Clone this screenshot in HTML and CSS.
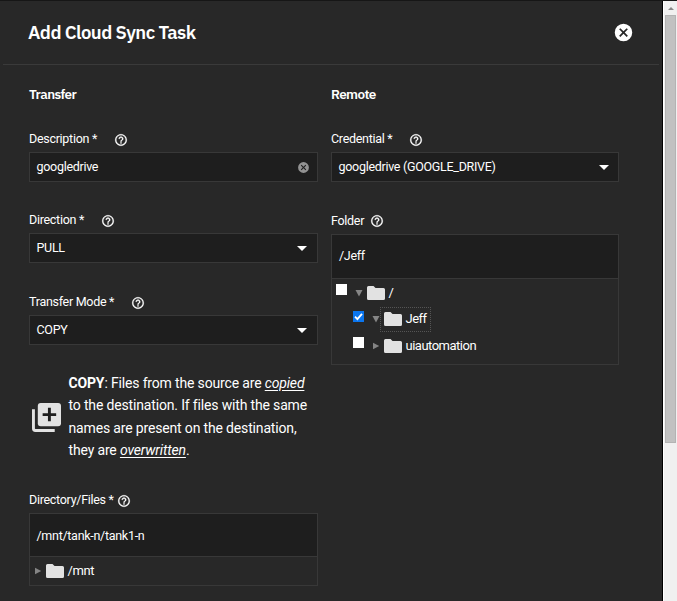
FILE: index.html
```
<!DOCTYPE html>
<html lang="en">
<head>
<meta charset="utf-8">
<title>Add Cloud Sync Task</title>
<link rel="stylesheet" href="styles.css">
</head>
<body>
<svg class="symbols" width="0" height="0">
  <symbol id="help" viewBox="0 0 24 24"><path d="M11 18h2v-2h-2v2zm1-16C6.48 2 2 6.48 2 12s4.48 10 10 10 10-4.48 10-10S17.52 2 12 2zm0 18c-4.410 0-8-3.590-8-8s3.590-8 8-8 8 3.590 8 8-3.590 8-8 8zm0-14c-2.210 0-4 1.790-4 4h2c0-1.100.9-2 2-2s2 .9 2 2c0 2-3 1.750-3 5h2c0-2.250 3-2.500 3-5 0-2.210-1.790-4-4-4z"/></symbol>
  <symbol id="cancel" viewBox="0 0 24 24"><path d="M12 2a10 10 0 1 0 0 20 10 10 0 0 0 0-20zm5 13.590L15.590 17 12 13.410 8.410 17 7 15.590 10.590 12 7 8.410 8.410 7 12 10.590 15.590 7 17 8.410 13.410 12z"/></symbol>
  <symbol id="folder" viewBox="0 0 18 14"><path d="M1.500 0H6.500L8.500 2H16.500Q18 2 18 3.500V12.500Q18 14 16.500 14H1.500Q0 14 0 12.500V1.500Q0 0 1.500 0z"/></symbol>
  <symbol id="down" viewBox="0 0 8 8"><path d="M.5 1h7L4 7.500z"/></symbol>
  <symbol id="right" viewBox="0 0 8 8"><path d="M1 .8v6.400L7.200 4z"/></symbol>
</svg>
<div class="window">
  <main class="panel">
    <header class="header">
      <h1 class="title">Add Cloud Sync Task</h1>
      <svg class="close"><use href="#cancel"/></svg>
    </header>
    <div class="columns">
      <section class="column">
        <h2 class="heading">Transfer</h2>
        <div class="field">
          <div class="label"><span>Description *</span><svg class="help wide"><use href="#help"/></svg></div>
          <div class="control"><span>googledrive</span><svg class="clear"><use href="#cancel"/></svg></div>
        </div>
        <div class="field">
          <div class="label"><span>Direction *</span><svg class="help wide"><use href="#help"/></svg></div>
          <div class="control"><span>PULL</span><i class="caret"></i></div>
        </div>
        <div class="field mode">
          <div class="label"><span>Transfer Mode *</span><svg class="help wide"><use href="#help"/></svg></div>
          <div class="control"><span>COPY</span><i class="caret"></i></div>
        </div>
        <div class="note">
          <svg class="copy" viewBox="0 0 30 30"><path d="M1.500 6.500V26.500Q1.500 28.500 3.500 28.500H23.500" fill="none" stroke="#e2e2e2" stroke-width="3"/><rect x="6" width="24" height="24" rx="3" fill="#e2e2e2"/><path d="M18 5v14M11 12h14" stroke="#1e1e1e" stroke-width="3"/></svg>
          <p><b>COPY</b>: Files from the source are <em>copied</em><br>to the destination. If files with the same<br>names are present on the destination,<br>they are <em>overwritten</em>.</p>
        </div>
        <div class="field directory">
          <div class="label"><span>Directory/Files *</span><svg class="help"><use href="#help"/></svg></div>
          <div class="explorer">
            <div class="path">/mnt/tank-n/tank1-n</div>
            <div class="node mnt"><svg class="arrow"><use href="#right"/></svg><span class="item"><svg class="folder"><use href="#folder"/></svg>/mnt</span></div>
          </div>
        </div>
      </section>
      <section class="column">
        <h2 class="heading">Remote</h2>
        <div class="field">
          <div class="label"><span>Credential *</span><svg class="help wide"><use href="#help"/></svg></div>
          <div class="control"><span>googledrive (GOOGLE_DRIVE)</span><i class="caret"></i></div>
        </div>
        <div class="field remote-folder">
          <div class="label"><span>Folder</span><svg class="help"><use href="#help"/></svg></div>
          <div class="explorer tall">
            <div class="path">/Jeff</div>
            <div class="node"><i class="check"></i><svg class="arrow"><use href="#down"/></svg><span class="item"><svg class="folder"><use href="#folder"/></svg>/</span></div>
            <div class="node child"><i class="check on"><svg viewBox="0 0 11 11"><path d="M2 5.700l2.400 2.500L9 2.800"/></svg></i><svg class="arrow"><use href="#down"/></svg><span class="item selected"><svg class="folder"><use href="#folder"/></svg>Jeff</span></div>
            <div class="node child"><i class="check"></i><svg class="arrow"><use href="#right"/></svg><span class="item"><svg class="folder"><use href="#folder"/></svg>uiautomation</span></div>
          </div>
        </div>
      </section>
    </div>
  </main>
  <aside class="scrollbar"><div class="scroll-up"><i></i></div><div class="thumb"></div></aside>
</div>
</body>
</html>
```
FILE: styles.css
```
* { box-sizing: border-box; }
body { margin: 0; background: #282828; color: #fff; font: 12.5px/16px Roboto, sans-serif; letter-spacing: -.29px; overflow: hidden; }
svg { display: block; flex: none; fill: currentColor; }
.symbols { position: absolute; }
.window { display: flex; height: 601px; border-top: 1px solid #161616; }
.panel { width: 663px; flex: none; border-right: 1px solid #000; }
.header { display: flex; justify-content: space-between; align-items: center; height: 64px; margin: 0 3px; padding: 0 25px 1px; border-bottom: 1px solid #3a3a3a; }
.title { margin: 0; font: 600 18.5px/24px "IBM Plex Sans", Roboto, sans-serif; letter-spacing: -.56px; }
.close { width: 21px; height: 21px; }
.columns { display: grid; grid-template-columns: 289px 288px; gap: 13px; padding: 22px 0 0 29px; }
.heading { margin: 0; height: 40px; font: 600 13.5px/15px "IBM Plex Sans", Roboto, sans-serif; letter-spacing: -.6px; }
.field { margin-bottom: 26px; }
.label { display: flex; align-items: flex-start; height: 25px; padding-top: 4px; }
.help { width: 14px; height: 14px; margin: 2px 0 0 5px; stroke: #fff; stroke-width: .4; }
.help.wide { margin-left: 17px; }
.control { display: flex; justify-content: space-between; align-items: center; height: 30px; padding: 0 10px 0 6.5px; border: 1px solid #383838; background: #1e1e1e; }
.column + .column .control { padding-right: 9px; }
.clear { width: 13px; height: 13px; margin-right: -3px; color: #929292; }
.caret { border: 5px solid transparent; border-top-color: #fff; border-bottom: 0; }
.field.mode { margin: 27px 0; }
.note { display: flex; align-items: center; height: 89px; margin-bottom: 30px; padding-left: 2.5px; }
.copy { width: 29px; height: 29px; margin: 2px 8px 0 0; }
.note p { margin: 0; font-size: 14px; line-height: 22.300px; letter-spacing: -.16px; white-space: nowrap; }
.note em { text-decoration: underline; text-underline-offset: 2px; }
.directory { margin: 0; }
.directory .label { height: 22px; padding-top: 1px; }
.directory .help { margin-left: 3.5px; }
.explorer { height: 73px; border: 1px solid #383838; }
.path { height: 43px; padding: 0 6.5px; border-bottom: 1px solid #383838; background: #1e1e1e; line-height: 43px; }
.tall .path { height: 44px; padding-left: 7px; line-height: 42px; }
.node { display: flex; align-items: center; height: 27px; padding-left: 4px; font-size: 13px; letter-spacing: -.5px; }
.mnt { height: 28px; letter-spacing: -.4px; }
.arrow { width: 8px; height: 8px; color: #858585; }
.item { display: flex; align-items: center; gap: 3.5px; margin-left: 0; height: 25px; padding: 0 3px; border: 1px solid transparent; }
.item.selected { border: 1px dotted #555; }
.folder { width: 18px; height: 14px; color: #e2e2e2; }
.remote-folder .label { height: 26px; padding-top: 5px; }
.remote-folder .help { margin: 1px 0 0 6px; }
.explorer.tall { height: 131px; }
.child { height: 26px; padding-left: 21px; }
.child + .child { height: 27px; }
.check { width: 11px; height: 11px; margin: -6px 8px 0 0; background: #fff; }
.check.on { background: #0b76ef; }
.check svg { fill: none; stroke: #fff; stroke-width: 1.800; }
.scrollbar { width: 14px; flex: none; border-left: 1px solid #fff; background: #f0f0f0; }
.scroll-up { display: flex; height: 14px; align-items: center; justify-content: center; }
.scroll-up i { border: 3px solid transparent; border-top: 0; border-bottom-color: #888; }
.thumb { height: 428px; margin: 0 1px; background: #c1c1c1; border: 1px solid #b3b3b3; }
```
